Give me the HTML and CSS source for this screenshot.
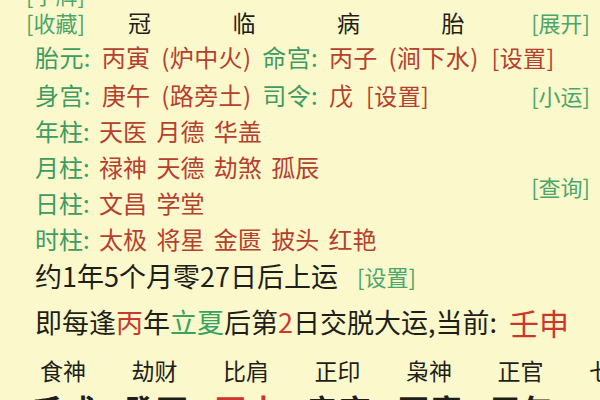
FILE: index.html
```html
<!DOCTYPE html>
<html lang="zh-CN">
<head>
    <meta charset="UTF-8">
    <title>排盘</title>
    <link rel="stylesheet" href="styles.css">
</head>
<body>
    <div class="page">
        <div class="row top-row">
            <span class="link side">[字牌]</span>
        </div>
        <div class="row stage-row">
            <span class="link side">[收藏]</span>
            <div class="stages">
                <span>冠</span>
                <span>临</span>
                <span>病</span>
                <span>胎</span>
            </div>
            <span class="link">[展开]</span>
        </div>

        <div class="row info">
            <span><span class="label">胎元:</span> <span class="val">丙寅 (炉中火)</span> <span class="label">命宫:</span> <span class="val">丙子 (涧下水)</span> <span class="val set">[设置]</span></span>
        </div>
        <div class="row info spread">
            <span><span class="label">身宫:</span> <span class="val">庚午 (路旁土)</span> <span class="label">司令:</span> <span class="val">戊</span> <span class="val set">[设置]</span></span>
            <span class="link">[小运]</span>
        </div>

        <div class="shensha">
            <div class="shensha-list">
                <div class="row"><span><span class="label">年柱:</span> <span class="val">天医 月德 华盖</span></span></div>
                <div class="row"><span><span class="label">月柱:</span> <span class="val">禄神 天德 劫煞 孤辰</span></span></div>
                <div class="row"><span><span class="label">日柱:</span> <span class="val">文昌 学堂</span></span></div>
                <div class="row"><span><span class="label">时柱:</span> <span class="val">太极 将星 金匮 披头 红艳</span></span></div>
            </div>
            <span class="link">[查询]</span>
        </div>

        <div class="row dayun">约1年5个月零27日后上运<span class="link small">[设置]</span></div>
        <div class="row dayun-rule">即每逢<span class="red">丙</span>年<span class="green">立夏</span>后第<span class="red">2</span>日交脱大运,当前:<span class="red big">壬申</span></div>

        <div class="gods">
            <span>食神</span>
            <span>劫财</span>
            <span>比肩</span>
            <span>正印</span>
            <span>枭神</span>
            <span>正官</span>
            <span>七杀</span>
        </div>
        <div class="pillars">
            <span>壬戌</span>
            <span>癸酉</span>
            <span class="red">丙申</span>
            <span>辛亥</span>
            <span>丙寅</span>
            <span>甲午</span>
        </div>
    </div>
</body>
</html>
```

FILE: styles.css
```css
* {
    box-sizing: border-box;
}

html, body {
    margin: 0;
    height: 100%;
    overflow: hidden;
}

body {
    background-color: #fbf8cb;
    font-family: "Noto Sans CJK SC", "Noto Sans", sans-serif;
    color: #1f1f1a;
}

.page {
    margin-top: -18px;
    padding: 0 10px 0 35px;
}

.row {
    height: 36px;
    display: flex;
    align-items: center;
    font-size: 24px;
    line-height: 1.2;
    white-space: nowrap;
    word-spacing: 4px;
}

.spread {
    justify-content: space-between;
}

.label {
    color: #3e9b61;
}

.val {
    color: #b5402f;
}

.set {
    font-size: 23px;
    margin-left: 2px;
}

.link {
    color: #4aa66c;
    font-size: 22px;
    word-spacing: 0;
    letter-spacing: 0;
}

.side {
    margin-left: -9px;
}

.top-row {
    height: 24px;
    line-height: 18px;
}

.stage-row {
    height: 33px;
    justify-content: space-between;
}

.stages {
    flex: 1;
    display: flex;
    padding-left: 43px;
    font-size: 23px;
}

.stages span {
    width: 104.5px;
}

.stages span:last-child {
    width: auto;
}

.info {
    height: 37px;
    letter-spacing: 0.4px;
    word-spacing: 5px;
}

.info + .info {
    height: 38px;
}

.shensha {
    display: flex;
    justify-content: space-between;
    align-items: center;
}

.shensha-list .row {
    height: 35.75px;
}

.dayun {
    height: 38px;
    font-size: 27px;
}

.small {
    margin-left: 19px;
}

.dayun-rule {
    margin-top: 9px;
    font-size: 27px;
    word-spacing: 0;
}

.red {
    color: #c9382b;
}

.green {
    color: #37a35e;
}

.big {
    font-size: 30px;
    margin-left: 12px;
}

.gods {
    display: flex;
    margin-top: 12px;
    padding-left: 5px;
    height: 36px;
    align-items: center;
    font-size: 23px;
    white-space: nowrap;
}

.gods span {
    flex: none;
    width: 91.5px;
}

.pillars {
    display: flex;
    margin-top: -2px;
    margin-left: -3px;
    font-size: 31px;
    font-weight: bold;
    white-space: nowrap;
}

.pillars span {
    flex: none;
    width: 91.5px;
    letter-spacing: 2px;
}
```
